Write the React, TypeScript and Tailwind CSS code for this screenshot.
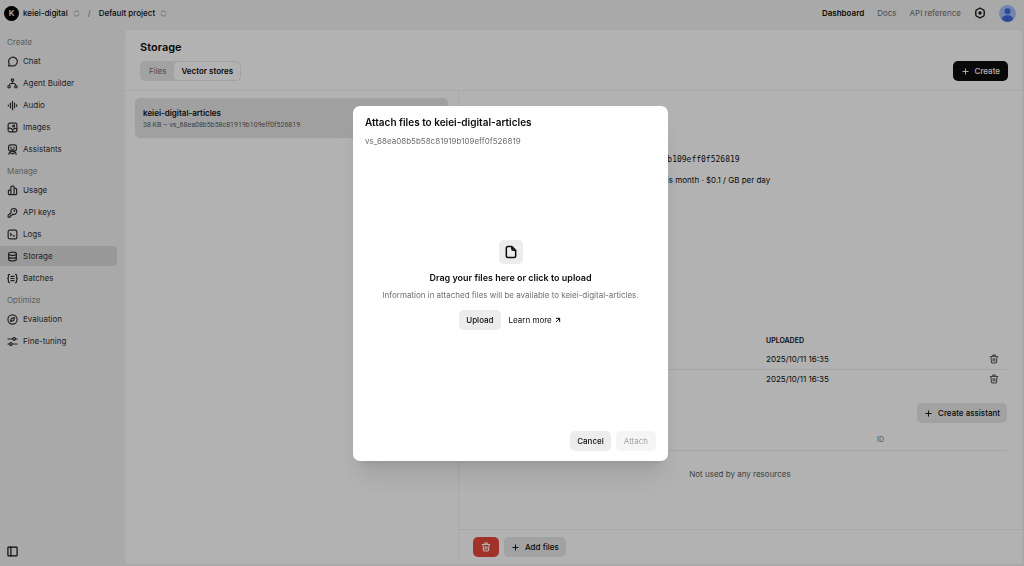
import type { ReactNode } from "react";
import { ArrowUpRight, Plus } from "lucide-react";

const STORE_NAME = "keiei-digital-articles";
const STORE_ID = "vs_68ea08b5b58c81919b109eff0f526819";

const Icon = ({ children, className = "size-[11px]" }: { children: ReactNode; className?: string }) => (
  <svg
    viewBox="0 0 24 24"
    fill="none"
    stroke="currentColor"
    strokeWidth={2.6}
    strokeLinecap="round"
    strokeLinejoin="round"
    aria-hidden="true"
    className={`${className} shrink-0`}
  >
    {children}
  </svg>
);

const ChatIcon = () => (
  <Icon>
    <path d="M12 21.500H3.200l2-4A9.500 9.500 0 1 1 12 21.500Z" />
  </Icon>
);

const AgentIcon = () => (
  <Icon>
    <circle cx="12" cy="4.500" r="2.700" />
    <circle cx="4.500" cy="19" r="2.700" />
    <circle cx="19.500" cy="19" r="2.700" />
    <path d="M12 7.200V12M5 16c.5-2.500 2-4 4.500-4h5c2.500 0 4 1.500 4.500 4" />
  </Icon>
);

const AudioIcon = () => (
  <Icon>
    <path d="M3 11v2M7.500 7v10M12 3v18M16.500 7v10M21 10.500v3" />
  </Icon>
);

const ImagesIcon = () => (
  <Icon>
    <rect x="2.500" y="2.500" width="19" height="19" rx="3" />
    <circle cx="14.500" cy="8.500" r="2" />
    <path d="M3 13.500c6-1 9.500 2 10 8M13.500 16c2-2 5-2.500 8-1" />
  </Icon>
);

const AssistantsIcon = () => (
  <Icon>
    <rect x="3.500" y="2" width="17" height="13" rx="3.500" />
    <path d="M8.500 7v1.500M15.500 7v1.500M9 11.500h6M4 22.500c.8-4.500 3.500-7 8-7s7.200 2.500 8 7M8 19.500l4 2 4-2" />
  </Icon>
);

const UsageIcon = () => (
  <Icon>
    <path d="M8.500 21V4.500a2 2 0 0 1 2-2h3a2 2 0 0 1 2 2V21M8.500 11H5a2 2 0 0 0-2 2v6a2 2 0 0 0 2 2h14a2 2 0 0 0 2-2V9.500a2 2 0 0 0-2-2h-3.500" />
  </Icon>
);

const KeyIcon = () => (
  <Icon>
    <path d="M9 12.500a6.500 6.500 0 1 1 3.500 3.300L10.500 18H8v2.500L6.500 22H2.500v-4L9 12.500Z" />
    <circle cx="16" cy="8" r=".8" />
  </Icon>
);

const LogsIcon = () => (
  <Icon>
    <rect x="2.500" y="2.500" width="19" height="19" rx="3.500" />
    <path d="M7.500 9.500l2.500 2.500-2.500 2.500M13.500 15h3" />
  </Icon>
);

const StorageIcon = () => (
  <Icon>
    <ellipse cx="12" cy="6" rx="8.500" ry="3.700" />
    <path d="M3.500 6v12c0 2 3.800 3.700 8.500 3.700s8.500-1.700 8.500-3.700V6M3.500 12c0 2 3.800 3.700 8.500 3.700s8.500-1.700 8.500-3.700" />
  </Icon>
);

const BatchesIcon = () => (
  <Icon>
    <path d="M5.500 3C3.500 3 3 4 3 6v3c0 1.800-.6 3-2 3 1.400 0 2 1.200 2 3v3c0 2 .5 3 2.500 3M18.500 3c2 0 2.500 1 2.500 3v3c0 1.800.6 3 2 3-1.400 0-2 1.200-2 3v3c0 2-.5 3-2.500 3M8.500 7.500h7M8.500 12h7M8.500 16.500h7" />
  </Icon>
);

const EvaluationIcon = () => (
  <Icon>
    <circle cx="12" cy="12" r="10" />
    <path d="M16.500 7.500l-2 6.500-7 2.500 2-6.500 7-2.500Z" />
  </Icon>
);

const TuningIcon = () => (
  <Icon>
    <circle cx="15.500" cy="6.500" r="3" />
    <circle cx="8.500" cy="17.500" r="3" />
    <path d="M2 6.500h10.500M18.500 6.500H22M2 17.500h3.500M11.500 17.500H22" />
  </Icon>
);

const GearIcon = () => (
  <Icon className="size-3">
    <path d="M9.500 3.500L12 2l2.500 1.500 5 2.500.9 2.500v7l-.9 2.500-5 2.500L12 22l-2.500-1.500-5-2.500-.9-2.500v-7L4.500 6l5-2.500Z" />
    <circle cx="12" cy="12" r="2" />
  </Icon>
);

const TrashIcon = () => (
  <Icon className="size-[10px]">
    <path d="M3 6h18M8 6c0-2.500 1.500-4 4-4s4 1.500 4 4M4.800 6l1 13a3 3 0 0 0 3 2.700h6.400a3 3 0 0 0 3-2.700l1-13M10 11v5.500M14 11v5.500" />
  </Icon>
);

const FileIcon = () => (
  <Icon className="size-[14px]">
    <path d="M13.500 2.500H7a3 3 0 0 0-3 3v13a3 3 0 0 0 3 3h10a3 3 0 0 0 3-3V9l-6.500-6.500ZM13.500 2.500V7a2 2 0 0 0 2 2H20" />
  </Icon>
);

const PanelIcon = () => (
  <Icon className="size-[11px]">
    <rect x="2" y="2.500" width="20" height="19" rx="1.500" />
    <path d="M8.500 2.500v19" />
  </Icon>
);

const SelectorIcon = () => (
  <Icon className="size-[7px] text-[#8a8a8a]">
    <path d="M4 8l8-6 8 6M4 16l8 6 8-6" />
  </Icon>
);

const sections = [
  {
    title: "Create",
    items: [
      { label: "Chat", icon: ChatIcon },
      { label: "Agent Builder", icon: AgentIcon },
      { label: "Audio", icon: AudioIcon },
      { label: "Images", icon: ImagesIcon },
      { label: "Assistants", icon: AssistantsIcon },
    ],
  },
  {
    title: "Manage",
    items: [
      { label: "Usage", icon: UsageIcon },
      { label: "API keys", icon: KeyIcon },
      { label: "Logs", icon: LogsIcon },
      { label: "Storage", icon: StorageIcon },
      { label: "Batches", icon: BatchesIcon },
    ],
  },
  {
    title: "Optimize",
    items: [
      { label: "Evaluation", icon: EvaluationIcon },
      { label: "Fine-tuning", icon: TuningIcon },
    ],
  },
];

const files = [
  { name: "file-1", uploaded: "2025/10/11 16:35" },
  { name: "file-2", uploaded: "2025/10/11 16:35" },
];

const Header = () => (
  <header className="flex h-[30px] shrink-0 items-center justify-between pt-[2px] pr-2 pb-[6px] pl-1 font-medium">
    <div className="flex items-center">
      <span className="mr-1 flex size-[15px] items-center justify-center rounded-full bg-black text-[8px] font-semibold text-white">
        K
      </span>
      <button className="flex items-center gap-[5px]">
        keiei-digital <SelectorIcon />
      </button>
      <span className="mx-2 text-[#8a8a8a]">/</span>
      <button className="flex items-center gap-[5px]">
        Default project <SelectorIcon />
      </button>
    </div>
    <nav className="flex items-center gap-[13px] font-normal text-[#6e6e6e]">
      <a href="#dashboard" className="font-semibold text-[#0d0d0d]">Dashboard</a>
      <a href="#docs">Docs</a>
      <a href="#reference">API reference</a>
      <button aria-label="Settings" className="text-[#0d0d0d]">
        <GearIcon />
      </button>
      <button aria-label="Account">
        <svg viewBox="0 0 34 34" className="size-[17px]">
          <circle cx="17" cy="17" r="17" fill="#a9bff5" />
          <circle cx="17" cy="12.500" r="6" fill="#4468d8" />
          <path d="M6 29c0-6 5-8.500 11-8.500S28 23 28 29c-3 3-6.500 5-11 5S9 32 6 29Z" fill="#4468d8" />
        </svg>
      </button>
    </nav>
  </header>
);

const Sidebar = () => (
  <aside className="flex w-[125px] shrink-0 flex-col justify-between pt-1 pr-2 pb-[9px]">
    <nav className="flex flex-col gap-1">
      {sections.map((section) => (
        <div key={section.title}>
          <h2 className="mb-px pl-[7px] leading-4 text-[#858585]">{section.title}</h2>
          <ul className="flex flex-col gap-[2px]">
            {section.items.map(({ label, icon: ItemIcon }) => (
              <li key={label}>
                <a
                  href="#"
                  className={`flex h-5 items-center gap-[5px] rounded-r-[4px] pl-[7px] text-[#303030] ${
                    label === "Storage" ? "bg-[#dcdcdc]" : ""
                  }`}
                >
                  <ItemIcon />
                  {label}
                </a>
              </li>
            ))}
          </ul>
        </div>
      ))}
    </nav>
    <button aria-label="Collapse sidebar" className="ml-[7px] w-fit">
      <PanelIcon />
    </button>
  </aside>
);

const StoreDetail = () => (
  <section className="flex min-w-0 flex-1 flex-col">
    <div className="min-h-0 flex-1 overflow-hidden pt-[61px] pr-[15px] pl-[14px]">
      <dl className="grid grid-cols-[98px_1fr] gap-y-1 leading-4">
        <dt className="text-[#6e6e6e]">ID</dt>
        <dd className="font-['DejaVu_Sans_Mono',monospace]">{STORE_ID}</dd>
        <dt className="text-[#6e6e6e]">Usage</dt>
        <dd>0 KB hours so far used this month · $0.1 / GB per day</dd>
      </dl>
      <table className="mt-[145px] w-full table-fixed text-left">
        <thead>
          <tr className="h-[16px] text-[7px]">
            <th className="font-semibold">FILE</th>
            <th className="w-[206px] font-semibold">UPLOADED</th>
            <th aria-label="Actions" className="w-[35px]" />
          </tr>
        </thead>
        <tbody>
          {files.map((file) => (
            <tr key={file.name} className="h-5 border-b border-[#ececec] last:border-0">
              <td>{file.name}</td>
              <td>{file.uploaded}</td>
              <td>
                <button aria-label="Remove file" className="ml-[17px] block text-[#5d5d5d]">
                  <TrashIcon />
                </button>
              </td>
            </tr>
          ))}
        </tbody>
      </table>
      <div className="mt-[14px] flex items-center justify-between">
        <h3 className="font-semibold">Used by</h3>
        <button className="flex h-5 items-center gap-[5px] rounded-[5px] bg-[#e8e8e8] px-[7px] font-medium">
          <Plus className="size-[9px]" strokeWidth={2.5} />
          Create assistant
        </button>
      </div>
      <table className="mt-2 w-full table-fixed text-left">
        <thead>
          <tr className="h-[19px] border-b border-[#ececec] text-[7px] text-[#6e6e6e]">
            <th className="font-normal">RESOURCE</th>
            <th className="w-[130px] font-normal">ID</th>
          </tr>
        </thead>
        <tbody>
          <tr className="h-[48px] text-center text-[#5d5d5d]">
            <td colSpan={2}>Not used by any resources</td>
          </tr>
        </tbody>
      </table>
    </div>
    <footer className="flex h-[35px] shrink-0 items-center gap-[5px] border-t border-[#f0f0f0] px-[14px]">
      <button aria-label="Delete vector store" className="flex h-5 w-[26px] items-center justify-center rounded-[5px] bg-[#e5483d] text-white">
        <TrashIcon />
      </button>
      <button className="flex h-5 items-center gap-[5px] rounded-[5px] bg-[#e8e8e8] px-[7px] font-medium">
        <Plus className="size-[9px]" strokeWidth={2.5} />
        Add files
      </button>
    </footer>
  </section>
);

const AttachDialog = () => (
  <div className="fixed inset-0 flex items-center justify-center bg-black/30">
    <div
      role="dialog"
      aria-modal="true"
      aria-labelledby="attach-title"
      className="mr-[3px] flex h-[355px] w-[315px] flex-col rounded-[7px] bg-white px-3 pt-2 pb-[10px] shadow-xl"
    >
      <h2 id="attach-title" className="text-[10px] leading-4 font-semibold">
        Attach files to {STORE_NAME}
      </h2>
      <p className="mt-[5px] leading-3 text-[#6e6e6e]">{STORE_ID}</p>
      <div className="flex flex-1 flex-col items-center justify-center pb-2">
        <span className="flex size-6 items-center justify-center rounded-[5px] bg-[#ececec]">
          <FileIcon />
        </span>
        <h3 className="mt-2 text-[9px] leading-3 font-semibold">Drag your files here or click to upload</h3>
        <p className="mt-[5px] leading-3 text-[#6e6e6e]">
          Information in attached files will be available to {STORE_NAME}.
        </p>
        <div className="mt-[9px] flex items-center gap-2">
          <button className="h-5 rounded-[5px] bg-[#ececec] px-[7px] font-medium">Upload</button>
          <a href="#learn-more" className="flex items-center gap-[2px]">
            Learn more <ArrowUpRight className="size-2" strokeWidth={3} />
          </a>
        </div>
      </div>
      <div className="flex justify-end gap-[5px]">
        <button className="h-5 rounded-[5px] bg-[#ececec] px-[7px] font-medium">Cancel</button>
        <button disabled className="h-5 rounded-[5px] bg-[#f5f5f5] px-2 text-[#a3a3a3]">Attach</button>
      </div>
    </div>
  </div>
);

const App = () => (
  <div className="flex h-screen flex-col overflow-hidden bg-[#f3f3f3] font-['Inter',sans-serif] text-[8px] text-[#0d0d0d]">
    <Header />
    <div className="flex min-h-0 flex-1">
      <Sidebar />
      <main className="mr-[2px] mb-[2px] flex min-w-0 flex-1 flex-col rounded-[4px] bg-white">
        <div className="flex h-[61px] shrink-0 items-end justify-between border-b border-[#f3f3f3] pr-[14px] pb-[9px] pl-[15px]">
          <div>
            <h1 className="text-[11px] leading-4 font-semibold">Storage</h1>
            <div role="tablist" className="mt-[6px] flex h-5 rounded-[5px] bg-[#e8e8e8] p-px">
              <button role="tab" aria-selected="false" className="px-2 text-[#6e6e6e]">Files</button>
              <button role="tab" aria-selected="true" className="rounded-[4px] bg-white px-[7px] font-semibold">
                Vector stores
              </button>
            </div>
          </div>
          <button className="flex h-5 items-center gap-[5px] rounded-[5px] bg-[#0d0d0d] px-2 font-medium text-white">
            <Plus className="size-[9px]" strokeWidth={2.5} />
            Create
          </button>
        </div>
        <div className="flex min-h-0 flex-1">
          <section className="w-[334px] shrink-0 border-r border-[#f3f3f3] px-[10px] pt-[7px]">
            <button className="flex h-10 w-full flex-col justify-center rounded-[5px] bg-[#e6e6e6] px-2 pt-[2px] text-left">
              <span className="leading-3 font-semibold">{STORE_NAME}</span>
              <span className="font-['Roboto',sans-serif] text-[7px] leading-3 text-[#5d5d5d]">38 KB – {STORE_ID}</span>
            </button>
          </section>
          <StoreDetail />
        </div>
      </main>
    </div>
    <AttachDialog />
  </div>
);

export default App;
